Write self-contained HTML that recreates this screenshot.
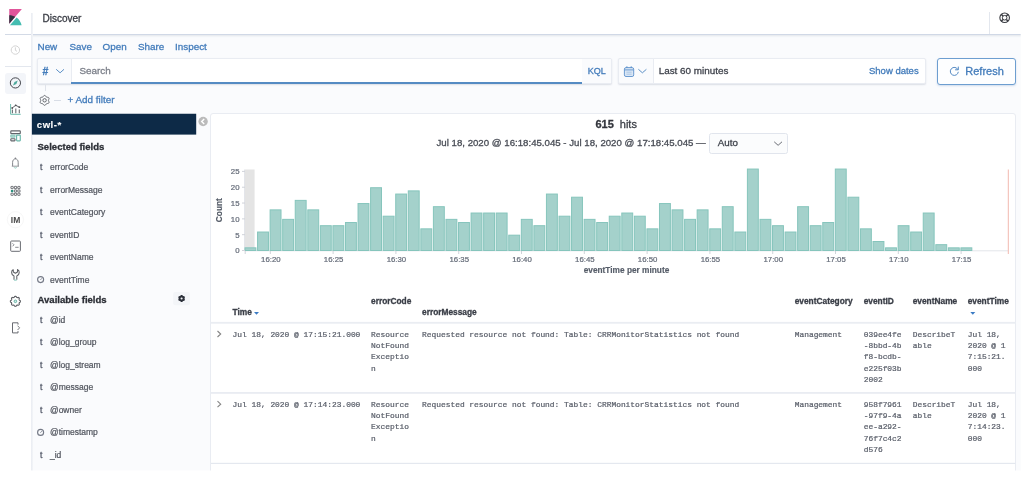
<!DOCTYPE html>
<html lang="en">
<head>
<meta charset="utf-8">
<title>Discover - Kibana</title>
<style>
*{box-sizing:border-box;margin:0;padding:0}
html,body{width:1024px;height:487px;overflow:hidden;background:#fff}
body{font-family:"Liberation Sans",sans-serif;color:#343741;font-size:9.9px;position:relative}
#wrap{position:absolute;left:0;top:0;width:1024px;height:487px;filter:blur(0.5px)}
.abs{position:absolute}
.t{position:absolute;white-space:nowrap;line-height:12px;-webkit-text-stroke:0.3px currentColor}
#bg{left:32px;top:35px;width:992px;height:440px;background:#fafbfd}
#header{left:0;top:0;width:1024px;height:34.5px;background:#fff;border-bottom:1px solid #d0d8e6;box-shadow:0 1px 2px rgba(152,162,179,.25)}
#nav{left:0;top:0;width:31.5px;height:475px;background:#fff}
#navb{left:30.7px;top:12.5px;width:2.1px;height:462px;background:linear-gradient(to right,#e9ecf2,#f3f5f8)}
#navsep1{left:5px;top:34px;width:26px;height:1px;background:#d3dae6}
#navsep2{left:5px;top:66px;width:26px;height:1px;background:#e3e7ee}
#navact{left:5px;top:72.5px;width:21px;height:21px;border-radius:3px;background:#f3f5f9}
.lnk{color:#437cbb}
.chart{position:absolute;left:0;top:0}
.tk{font-family:"Liberation Sans",sans-serif;font-size:7.8px;fill:#666d7a;stroke:#666d7a;stroke-width:0.22px}
.axt{font-family:"Liberation Sans",sans-serif;font-size:8.3px;font-weight:bold;fill:#555c68;stroke:#555c68;stroke-width:0.15px}
#qbar{left:37px;top:58px;width:575.3px;height:26.4px;background:#fff;border:1px solid #e9ecf2;border-radius:2px;box-shadow:0 1px 1.5px rgba(150,160,180,.3)}
#qapp{left:582px;top:59px;width:29.3px;height:24.4px;background:#fafbfd}
#qpre{left:37px;top:58px;width:34.5px;height:26.4px;background:#fafbfd;border:1px solid #e9ecf2;border-right:1px solid #e9ecf2;border-radius:2px 0 0 2px}
#qline{left:71.3px;top:82.4px;width:510.7px;height:1.6px;background:#558bc3}
#dbar{left:617.7px;top:58px;width:308.8px;height:26.4px;background:#fff;border:1px solid #e9ecf2;border-radius:2px;box-shadow:0 1px 1.5px rgba(150,160,180,.3)}
#dpre{left:617.7px;top:58px;width:36px;height:26.4px;background:#fafbfd;border:1px solid #e9ecf2;border-radius:2px 0 0 2px}
#refresh{left:936.7px;top:57.8px;width:79.2px;height:27px;background:#fdfeff;border:1.3px solid #6d9ed0;border-radius:3px;box-shadow:0 1px 2px rgba(80,130,190,.25)}
#sidehd{left:32px;top:113.8px;width:164.2px;height:20.7px;background:#0d2a47}
#panel{left:210px;top:113px;width:805.5px;height:360px;background:#fff;border:1px solid #e9ecf2;border-radius:3px 3px 0 0}
.fld{color:#52565f;font-size:8.5px;-webkit-text-stroke:0.22px currentColor}
.ft{color:#555b6a;font-size:8.6px;-webkit-text-stroke:0.3px currentColor}
.sh{font-weight:bold;font-size:9.55px;color:#2c2f36}
.th{font-weight:bold;font-size:8.35px;color:#3a3e47}
.td{font-family:"Liberation Mono",monospace;font-size:7.9px;line-height:11.35px;color:#5a5f6a;white-space:pre;position:absolute;-webkit-text-stroke:0.22px currentColor}
.w8{white-space:normal;word-break:break-all;width:38.6px}
.w9{white-space:normal;word-break:break-all;width:43.4px}
#selbox{left:708.7px;top:133px;width:79.8px;height:21px;border:1px solid #e1e5ed;border-radius:2.5px;background:#fbfcfd}
</style>
</head>
<body>
<div id="wrap">
<div class="abs" id="bg"></div>
<div class="abs" id="header"></div>
<div class="abs" id="nav"></div>
<div class="abs" id="navb"></div>
<div class="abs" id="navsep1"></div>
<div class="abs" id="navsep2"></div>
<div class="abs" id="navact"></div>

<!-- header -->
<div class="t" style="left:42.5px;top:12.5px;font-size:10px;color:#3a3d45">Discover</div>
<div class="abs" style="left:988.5px;top:12px;width:1px;height:22px;background:#e3e7ee"></div>

<!-- top nav menu -->
<div class="t lnk" style="left:37.5px;top:41px">New</div>
<div class="t lnk" style="left:69.5px;top:41px">Save</div>
<div class="t lnk" style="left:102.5px;top:41px">Open</div>
<div class="t lnk" style="left:138px;top:41px">Share</div>
<div class="t lnk" style="left:175px;top:41px">Inspect</div>

<!-- query bar -->
<div class="abs" id="qbar"></div>
<div class="abs" id="qapp"></div>
<div class="abs" id="qpre"></div>
<div class="abs" id="qline"></div>
<div class="t lnk" style="left:42.5px;top:64.5px;font-size:10.5px;font-weight:bold">#</div>
<div class="t" style="left:79.4px;top:65px;color:#7b7f89">Search</div>
<div class="t lnk" style="left:587.7px;top:65px;font-size:9px">KQL</div>

<!-- date picker -->
<div class="abs" id="dbar"></div>
<div class="abs" id="dpre"></div>
<div class="t" style="left:658.7px;top:65px;color:#40444d">Last 60 minutes</div>
<div class="t lnk" style="left:869px;top:65px;font-size:9.5px">Show dates</div>
<div class="abs" id="refresh"></div>
<div class="t lnk" style="left:965.3px;top:64.5px;font-size:11px">Refresh</div>

<!-- filter row -->
<div class="abs" style="left:45px;top:84px;width:1px;height:7px;background:#dfe3ea"></div>
<div class="abs" style="left:54px;top:99.5px;width:6.5px;height:1px;background:#d8dde6"></div>
<div class="t lnk" style="left:67.5px;top:94px">+ Add filter</div>

<!-- sidebar -->
<svg class="abs" style="left:0;top:0" width="1024" height="487" viewBox="0 0 1024 487"><rect x="31.9" y="113.75" width="164.3" height="20.85" fill="#0d2a47"/></svg>
<div class="t" style="left:36.8px;top:118.5px;font-weight:bold;color:#fff;font-size:9.6px;letter-spacing:0.5px;-webkit-text-stroke:0.1px #fff">cwl-*</div>
<div class="t sh" style="left:37.5px;top:141px">Selected fields</div>
<div class="t ft" style="left:40px;top:161.3px">t</div><div class="t fld" style="left:50px;top:161.3px">errorCode</div>
<div class="t ft" style="left:40px;top:183.8px">t</div><div class="t fld" style="left:50px;top:183.8px">errorMessage</div>
<div class="t ft" style="left:40px;top:206.3px">t</div><div class="t fld" style="left:50px;top:206.3px">eventCategory</div>
<div class="t ft" style="left:40px;top:228.8px">t</div><div class="t fld" style="left:50px;top:228.8px">eventID</div>
<div class="t ft" style="left:40px;top:251.3px">t</div><div class="t fld" style="left:50px;top:251.3px">eventName</div>
<div class="t fld" style="left:50px;top:273.8px">eventTime</div>
<div class="t sh" style="left:37.5px;top:293.9px">Available fields</div>
<div class="t ft" style="left:40px;top:313.8px">t</div><div class="t fld" style="left:50px;top:313.8px">@id</div>
<div class="t ft" style="left:40px;top:336.3px">t</div><div class="t fld" style="left:50px;top:336.3px">@log_group</div>
<div class="t ft" style="left:40px;top:358.8px">t</div><div class="t fld" style="left:50px;top:358.8px">@log_stream</div>
<div class="t ft" style="left:40px;top:381.3px">t</div><div class="t fld" style="left:50px;top:381.3px">@message</div>
<div class="t ft" style="left:40px;top:403.8px">t</div><div class="t fld" style="left:50px;top:403.8px">@owner</div>
<div class="t fld" style="left:50px;top:426.3px">@timestamp</div>
<div class="t ft" style="left:40px;top:448.8px">t</div><div class="t fld" style="left:50px;top:448.8px">_id</div>

<!-- main panel -->
<div class="abs" id="panel"></div>
<div class="t" style="left:595.5px;top:118.2px;font-size:11px;color:#33363d"><b>615</b></div>
<div class="t" style="left:619.8px;top:118.2px;font-size:11px;color:#3d4048">hits</div>
<div class="t" style="left:436.5px;top:137px;color:#4a4e57;font-size:9.66px">Jul 18, 2020 @ 16:18:45.045 - Jul 18, 2020 @ 17:18:45.045 —</div>
<div class="abs" id="selbox"></div>
<div class="t" style="left:717.8px;top:137px;color:#40444d;font-size:9.8px">Auto</div>

<svg class="chart" width="1024" height="487" viewBox="0 0 1024 487">
<rect x="245" y="169.5" width="9.6" height="81" fill="#e4e4e4"/>
<path d="M244.5 169.5V251M244.5 250.8H1008" stroke="#e3e5ea" stroke-width="1" fill="none"/>
<rect x="245.00" y="247.84" width="10.90" height="2.66" fill="#a4d1cb" stroke="#86c5bc" stroke-width="1"/>
<rect x="257.56" y="232.02" width="10.90" height="18.48" fill="#a4d1cb" stroke="#86c5bc" stroke-width="1"/>
<rect x="270.12" y="209.87" width="10.90" height="40.63" fill="#a4d1cb" stroke="#86c5bc" stroke-width="1"/>
<rect x="282.68" y="219.36" width="10.90" height="31.14" fill="#a4d1cb" stroke="#86c5bc" stroke-width="1"/>
<rect x="295.24" y="200.38" width="10.90" height="50.12" fill="#a4d1cb" stroke="#86c5bc" stroke-width="1"/>
<rect x="307.80" y="209.87" width="10.90" height="40.63" fill="#a4d1cb" stroke="#86c5bc" stroke-width="1"/>
<rect x="320.36" y="225.69" width="10.90" height="24.81" fill="#a4d1cb" stroke="#86c5bc" stroke-width="1"/>
<rect x="332.92" y="225.69" width="10.90" height="24.81" fill="#a4d1cb" stroke="#86c5bc" stroke-width="1"/>
<rect x="345.48" y="222.52" width="10.90" height="27.98" fill="#a4d1cb" stroke="#86c5bc" stroke-width="1"/>
<rect x="358.04" y="203.54" width="10.90" height="46.96" fill="#a4d1cb" stroke="#86c5bc" stroke-width="1"/>
<rect x="370.60" y="187.72" width="10.90" height="62.78" fill="#a4d1cb" stroke="#86c5bc" stroke-width="1"/>
<rect x="383.16" y="216.20" width="10.90" height="34.30" fill="#a4d1cb" stroke="#86c5bc" stroke-width="1"/>
<rect x="395.72" y="194.05" width="10.90" height="56.45" fill="#a4d1cb" stroke="#86c5bc" stroke-width="1"/>
<rect x="408.28" y="190.88" width="10.90" height="59.62" fill="#a4d1cb" stroke="#86c5bc" stroke-width="1"/>
<rect x="420.84" y="228.85" width="10.90" height="21.65" fill="#a4d1cb" stroke="#86c5bc" stroke-width="1"/>
<rect x="433.40" y="206.70" width="10.90" height="43.80" fill="#a4d1cb" stroke="#86c5bc" stroke-width="1"/>
<rect x="445.96" y="219.36" width="10.90" height="31.14" fill="#a4d1cb" stroke="#86c5bc" stroke-width="1"/>
<rect x="458.52" y="222.52" width="10.90" height="27.98" fill="#a4d1cb" stroke="#86c5bc" stroke-width="1"/>
<rect x="471.08" y="213.03" width="10.90" height="37.47" fill="#a4d1cb" stroke="#86c5bc" stroke-width="1"/>
<rect x="483.64" y="213.03" width="10.90" height="37.47" fill="#a4d1cb" stroke="#86c5bc" stroke-width="1"/>
<rect x="496.20" y="213.03" width="10.90" height="37.47" fill="#a4d1cb" stroke="#86c5bc" stroke-width="1"/>
<rect x="508.76" y="235.18" width="10.90" height="15.32" fill="#a4d1cb" stroke="#86c5bc" stroke-width="1"/>
<rect x="521.32" y="219.36" width="10.90" height="31.14" fill="#a4d1cb" stroke="#86c5bc" stroke-width="1"/>
<rect x="533.88" y="225.69" width="10.90" height="24.81" fill="#a4d1cb" stroke="#86c5bc" stroke-width="1"/>
<rect x="546.44" y="194.05" width="10.90" height="56.45" fill="#a4d1cb" stroke="#86c5bc" stroke-width="1"/>
<rect x="559.00" y="216.20" width="10.90" height="34.30" fill="#a4d1cb" stroke="#86c5bc" stroke-width="1"/>
<rect x="571.56" y="197.21" width="10.90" height="53.29" fill="#a4d1cb" stroke="#86c5bc" stroke-width="1"/>
<rect x="584.12" y="219.36" width="10.90" height="31.14" fill="#a4d1cb" stroke="#86c5bc" stroke-width="1"/>
<rect x="596.68" y="222.52" width="10.90" height="27.98" fill="#a4d1cb" stroke="#86c5bc" stroke-width="1"/>
<rect x="609.24" y="216.20" width="10.90" height="34.30" fill="#a4d1cb" stroke="#86c5bc" stroke-width="1"/>
<rect x="621.80" y="213.03" width="10.90" height="37.47" fill="#a4d1cb" stroke="#86c5bc" stroke-width="1"/>
<rect x="634.36" y="216.20" width="10.90" height="34.30" fill="#a4d1cb" stroke="#86c5bc" stroke-width="1"/>
<rect x="646.92" y="228.85" width="10.90" height="21.65" fill="#a4d1cb" stroke="#86c5bc" stroke-width="1"/>
<rect x="659.48" y="203.54" width="10.90" height="46.96" fill="#a4d1cb" stroke="#86c5bc" stroke-width="1"/>
<rect x="672.04" y="209.87" width="10.90" height="40.63" fill="#a4d1cb" stroke="#86c5bc" stroke-width="1"/>
<rect x="684.60" y="219.36" width="10.90" height="31.14" fill="#a4d1cb" stroke="#86c5bc" stroke-width="1"/>
<rect x="697.16" y="209.87" width="10.90" height="40.63" fill="#a4d1cb" stroke="#86c5bc" stroke-width="1"/>
<rect x="709.72" y="228.85" width="10.90" height="21.65" fill="#a4d1cb" stroke="#86c5bc" stroke-width="1"/>
<rect x="722.28" y="206.70" width="10.90" height="43.80" fill="#a4d1cb" stroke="#86c5bc" stroke-width="1"/>
<rect x="734.84" y="232.02" width="10.90" height="18.48" fill="#a4d1cb" stroke="#86c5bc" stroke-width="1"/>
<rect x="747.40" y="169.05" width="10.90" height="81.45" fill="#a4d1cb" stroke="#86c5bc" stroke-width="1"/>
<rect x="759.96" y="219.36" width="10.90" height="31.14" fill="#a4d1cb" stroke="#86c5bc" stroke-width="1"/>
<rect x="772.52" y="225.69" width="10.90" height="24.81" fill="#a4d1cb" stroke="#86c5bc" stroke-width="1"/>
<rect x="785.08" y="232.02" width="10.90" height="18.48" fill="#a4d1cb" stroke="#86c5bc" stroke-width="1"/>
<rect x="797.64" y="206.70" width="10.90" height="43.80" fill="#a4d1cb" stroke="#86c5bc" stroke-width="1"/>
<rect x="810.20" y="225.69" width="10.90" height="24.81" fill="#a4d1cb" stroke="#86c5bc" stroke-width="1"/>
<rect x="822.76" y="222.52" width="10.90" height="27.98" fill="#a4d1cb" stroke="#86c5bc" stroke-width="1"/>
<rect x="835.32" y="169.05" width="10.90" height="81.45" fill="#a4d1cb" stroke="#86c5bc" stroke-width="1"/>
<rect x="847.88" y="197.21" width="10.90" height="53.29" fill="#a4d1cb" stroke="#86c5bc" stroke-width="1"/>
<rect x="860.44" y="228.85" width="10.90" height="21.65" fill="#a4d1cb" stroke="#86c5bc" stroke-width="1"/>
<rect x="873.00" y="241.51" width="10.90" height="8.99" fill="#a4d1cb" stroke="#86c5bc" stroke-width="1"/>
<rect x="885.56" y="247.84" width="10.90" height="2.66" fill="#a4d1cb" stroke="#86c5bc" stroke-width="1"/>
<rect x="898.12" y="225.69" width="10.90" height="24.81" fill="#a4d1cb" stroke="#86c5bc" stroke-width="1"/>
<rect x="910.68" y="232.02" width="10.90" height="18.48" fill="#a4d1cb" stroke="#86c5bc" stroke-width="1"/>
<rect x="923.24" y="213.03" width="10.90" height="37.47" fill="#a4d1cb" stroke="#86c5bc" stroke-width="1"/>
<rect x="935.80" y="244.67" width="10.90" height="5.83" fill="#a4d1cb" stroke="#86c5bc" stroke-width="1"/>
<rect x="948.36" y="247.84" width="10.90" height="2.66" fill="#a4d1cb" stroke="#86c5bc" stroke-width="1"/>
<rect x="960.92" y="247.84" width="10.90" height="2.66" fill="#a4d1cb" stroke="#86c5bc" stroke-width="1"/>
<path d="M242 250.50H245" stroke="#d0d3d9" stroke-width="1"/>
<text x="239.5" y="253.40" text-anchor="end" class="tk">0</text>
<path d="M242 234.68H245" stroke="#d0d3d9" stroke-width="1"/>
<text x="239.5" y="237.58" text-anchor="end" class="tk">5</text>
<path d="M242 218.86H245" stroke="#d0d3d9" stroke-width="1"/>
<text x="239.5" y="221.76" text-anchor="end" class="tk">10</text>
<path d="M242 203.04H245" stroke="#d0d3d9" stroke-width="1"/>
<text x="239.5" y="205.94" text-anchor="end" class="tk">15</text>
<path d="M242 187.22H245" stroke="#d0d3d9" stroke-width="1"/>
<text x="239.5" y="190.12" text-anchor="end" class="tk">20</text>
<path d="M242 171.40H245" stroke="#d0d3d9" stroke-width="1"/>
<text x="239.5" y="174.30" text-anchor="end" class="tk">25</text>
<path d="M270.32 251V254" stroke="#d0d3d9" stroke-width="1"/>
<text x="270.82" y="262.3" text-anchor="middle" class="tk">16:20</text>
<path d="M333.12 251V254" stroke="#d0d3d9" stroke-width="1"/>
<text x="333.62" y="262.3" text-anchor="middle" class="tk">16:25</text>
<path d="M395.92 251V254" stroke="#d0d3d9" stroke-width="1"/>
<text x="396.42" y="262.3" text-anchor="middle" class="tk">16:30</text>
<path d="M458.72 251V254" stroke="#d0d3d9" stroke-width="1"/>
<text x="459.22" y="262.3" text-anchor="middle" class="tk">16:35</text>
<path d="M521.52 251V254" stroke="#d0d3d9" stroke-width="1"/>
<text x="522.02" y="262.3" text-anchor="middle" class="tk">16:40</text>
<path d="M584.32 251V254" stroke="#d0d3d9" stroke-width="1"/>
<text x="584.82" y="262.3" text-anchor="middle" class="tk">16:45</text>
<path d="M647.12 251V254" stroke="#d0d3d9" stroke-width="1"/>
<text x="647.62" y="262.3" text-anchor="middle" class="tk">16:50</text>
<path d="M709.92 251V254" stroke="#d0d3d9" stroke-width="1"/>
<text x="710.42" y="262.3" text-anchor="middle" class="tk">16:55</text>
<path d="M772.72 251V254" stroke="#d0d3d9" stroke-width="1"/>
<text x="773.22" y="262.3" text-anchor="middle" class="tk">17:00</text>
<path d="M835.52 251V254" stroke="#d0d3d9" stroke-width="1"/>
<text x="836.02" y="262.3" text-anchor="middle" class="tk">17:05</text>
<path d="M898.32 251V254" stroke="#d0d3d9" stroke-width="1"/>
<text x="898.82" y="262.3" text-anchor="middle" class="tk">17:10</text>
<path d="M961.12 251V254" stroke="#d0d3d9" stroke-width="1"/>
<text x="961.62" y="262.3" text-anchor="middle" class="tk">17:15</text>
<path d="M245.2 251V254" stroke="#d0d3d9" stroke-width="1"/>
<path d="M1008.3 169.5V254" stroke="#f2b8b0" stroke-width="1"/>
<text x="626.5" y="273.4" text-anchor="middle" class="axt">eventTime per minute</text>
<text transform="translate(222.1 210.2) rotate(-90)" text-anchor="middle" class="axt">Count</text>
</svg>

<!-- table header -->
<div class="t th" style="left:232.5px;top:305.7px">Time</div>
<div class="t th" style="left:371px;top:294.5px">errorCode</div>
<div class="t th" style="left:422px;top:305.7px">errorMessage</div>
<div class="t th" style="left:794.7px;top:294.5px">eventCategory</div>
<div class="t th" style="left:863.7px;top:294.5px">eventID</div>
<div class="t th" style="left:912.7px;top:294.5px">eventName</div>
<div class="t th" style="left:967.7px;top:294.5px">eventTime</div>
<svg class="abs" style="left:0;top:0" width="1024" height="487" viewBox="0 0 1024 487"><rect x="211" y="321.9" width="804.5" height="1.8" fill="#eaedf2"/><rect x="211" y="392" width="804.5" height="1.8" fill="#e9ecf2"/><rect x="211" y="462.8" width="804.5" height="1.2" fill="#e4e8ef"/></svg>

<!-- row 1 -->
<div class="td" style="left:232.5px;top:328.6px">Jul 18, 2020 @ 17:15:21.000</div>
<div class="td w8" style="left:371px;top:328.6px">ResourceNotFoundException</div>
<div class="td" style="left:422px;top:328.6px">Requested resource not found: Table: CRRMonitorStatistics not found</div>
<div class="td" style="left:794.7px;top:328.6px">Management</div>
<div class="td w8" style="left:863.7px;top:328.6px">039ee4fe-8bbd-4bf8-bcdb-e225f03b2002</div>
<div class="td w9" style="left:912.7px;top:328.6px">DescribeTable</div>
<div class="td w8" style="left:967.7px;top:328.6px">Jul 18, 2020 @ 17:15:21.000</div>

<!-- row 2 -->
<div class="td" style="left:232.5px;top:398.8px">Jul 18, 2020 @ 17:14:23.000</div>
<div class="td w8" style="left:371px;top:398.8px">ResourceNotFoundException</div>
<div class="td" style="left:422px;top:398.8px">Requested resource not found: Table: CRRMonitorStatistics not found</div>
<div class="td" style="left:794.7px;top:398.8px">Management</div>
<div class="td w8" style="left:863.7px;top:398.8px">958f7961-97f9-4aee-a292-76f7c4c2d576</div>
<div class="td w9" style="left:912.7px;top:398.8px">DescribeTable</div>
<div class="td w8" style="left:967.7px;top:398.8px">Jul 18, 2020 @ 17:14:23.000</div>


<!-- icons -->
<svg class="abs" style="left:0;top:0" width="1024" height="487" viewBox="0 0 1024 487" fill="none">
  <!-- kibana logo -->
  <g transform="translate(7.22 9.06) scale(0.507)">
    <polygon fill="#e0559a" points="4 0 4 28.789 28.935 .017"/>
    <path fill="#2f3340" d="M4,12 L4,28.789 L15.906,15.051 C12.368,13.115 8.317,12 4,12"/>
    <path fill="#45bdb1" d="M18.4793,16.6644 L6.2683,30.7544 L5.1863,31.9994 L28.4523,31.9994 C27.1763,25.7044 23.5243,20.2734 18.4793,16.6644"/>
  </g>
  <!-- recent clock -->
  <g stroke="#cfcfcf" stroke-width="0.9">
    <circle cx="15.4" cy="50.05" r="4.2"/>
    <path d="M15.4 47.4V50.4L17 51.3"/>
  </g>
  <!-- discover compass -->
  <circle cx="15.4" cy="82.9" r="5.1" stroke="#45474d" stroke-width="1"/>
  <polygon points="13,85.4 14.5,81.9 17.8,80.4 16.3,83.9" fill="#4fa99b"/>
  <!-- visualize -->
  <path d="M10.6 104V114.3H20.7" stroke="#6fbcae" stroke-width="1"/>
  <path d="M12.4 109.6V113.2M15.8 108.6V113.2M19.3 109.6V113.2" stroke="#6b6d73" stroke-width="1.1"/>
  <path d="M12.2 108L15.7 105.3L19.4 107.2" stroke="#505257" stroke-width="0.9"/>
  <circle cx="12.2" cy="108" r="0.9" fill="#505257"/><circle cx="15.7" cy="105.3" r="0.9" fill="#505257"/><circle cx="19.4" cy="107.2" r="0.9" fill="#505257"/>
  <!-- dashboard -->
  <rect x="10.8" y="130.9" width="9.5" height="2.7" rx="0.6" stroke="#63656b" stroke-width="1.15"/>
  <rect x="10.8" y="135.1" width="4.2" height="2" rx="0.4" fill="#bfe2db" stroke="#8fcabf" stroke-width="1.1"/>
  <rect x="16.6" y="135.1" width="3.7" height="5.7" rx="0.5" stroke="#6bb8ab" stroke-width="1.15" fill="#fff"/>
  <rect x="10.8" y="138.7" width="4.2" height="2.1" rx="0.5" stroke="#63656b" stroke-width="1.15"/>
  <!-- bell -->
  <path d="M12.6 166.1V162.3C12.6 160.2 13.8 158.9 15.4 158.9C17 158.9 18.2 160.2 18.2 162.3V166.1" stroke="#77797f" stroke-width="0.9"/>
  <path d="M11.8 166.2H19" stroke="#8a8d92" stroke-width="0.9"/>
  <circle cx="15.4" cy="158.2" r="0.8" fill="#77797f"/>
  <path d="M14.1 167.3C14.5 168.3 16.3 168.3 16.7 167.3" stroke="#7fc4b8" stroke-width="0.9"/>
  <!-- grid app -->
  <g stroke="#76787d" stroke-width="1.05">
    <circle cx="12.1" cy="187.5" r="1.25"/><circle cx="15.5" cy="187.5" r="1.25"/><circle cx="18.9" cy="187.5" r="1.25"/>
    <circle cx="15.5" cy="190.9" r="1.25"/><circle cx="18.9" cy="190.9" r="1.25"/>
    <circle cx="12.1" cy="194.3" r="1.25"/><circle cx="15.5" cy="194.3" r="1.25"/><circle cx="18.9" cy="194.3" r="1.25"/>
  </g>
  <circle cx="12.1" cy="191" r="1.35" fill="#2d8f7e"/>
  <!-- IM -->
  <circle cx="15.4" cy="219.7" r="8.1" stroke="#f7f7f7" stroke-width="1"/>
  <!-- console -->
  <rect x="10.7" y="241" width="9.7" height="10.3" rx="0.8" stroke="#6a6c72" stroke-width="1"/>
  <path d="M12.5 243.3L14 244.8L12.5 246.3" stroke="#6a6c72" stroke-width="0.8"/>
  <path d="M15.2 247.3H18.6" stroke="#6a6c72" stroke-width="0.8"/>
  <!-- wrench -->
  <path d="M13.3 269.5C11.9 270.1 11.5 271.4 11.6 272.6C11.7 274.3 12.7 275.5 14 276.1V279.8M16.8 279.8V276.1C18.1 275.5 19.1 274.3 19.2 272.6C19.3 271.4 18.9 270.1 17.5 269.5V272L15.4 273.3L13.3 272V269.5" stroke="#606267" stroke-width="1.05" stroke-linejoin="round"/>
  <path d="M14.1 280.1H16.7" stroke="#7fc4b8" stroke-width="1"/>
  <!-- management gear -->
  <path d="M20.42 301.30L20.39 300.97L20.28 300.66L19.91 300.40L19.54 300.19L19.38 299.95L19.26 299.70L19.17 299.44L19.11 299.16L19.22 298.74L19.30 298.31L19.16 298.01L18.95 297.75L18.69 297.54L18.39 297.40L17.96 297.48L17.54 297.59L17.26 297.53L17.00 297.44L16.75 297.32L16.51 297.16L16.30 296.79L16.04 296.42L15.73 296.31L15.40 296.28L15.07 296.31L14.76 296.42L14.50 296.79L14.29 297.16L14.05 297.32L13.80 297.44L13.54 297.53L13.26 297.59L12.84 297.48L12.41 297.40L12.11 297.54L11.85 297.75L11.64 298.01L11.50 298.31L11.58 298.74L11.69 299.16L11.63 299.44L11.54 299.70L11.42 299.95L11.26 300.19L10.89 300.40L10.52 300.66L10.41 300.97L10.38 301.30L10.41 301.63L10.52 301.94L10.89 302.20L11.26 302.41L11.42 302.65L11.54 302.90L11.63 303.16L11.69 303.44L11.58 303.86L11.50 304.29L11.64 304.59L11.85 304.85L12.11 305.06L12.41 305.20L12.84 305.12L13.26 305.01L13.54 305.07L13.80 305.16L14.05 305.28L14.29 305.44L14.50 305.81L14.76 306.18L15.07 306.29L15.40 306.32L15.73 306.29L16.04 306.18L16.30 305.81L16.51 305.44L16.75 305.28L17.00 305.16L17.26 305.07L17.54 305.01L17.96 305.12L18.39 305.20L18.69 305.06L18.95 304.85L19.16 304.59L19.30 304.29L19.22 303.86L19.11 303.44L19.17 303.16L19.26 302.90L19.38 302.65L19.54 302.41L19.91 302.20L20.28 301.94L20.39 301.63Z" stroke="#5f6166" stroke-width="1.15" stroke-linejoin="round"/>
  <circle cx="15.4" cy="301.3" r="1.3" stroke="#5aae9f" stroke-width="0.9" fill="#d5ece8"/>
  <!-- logout -->
  <path d="M18 324.6V322.8H12.5V332.9H18V331.1" stroke="#6a6c72" stroke-width="1"/>
  <path d="M17.6 325.7L19.6 327.85L17.6 330" stroke="#6a6c72" stroke-width="0.9"/>
  <!-- help lifebuoy -->
  <g stroke="#3a3c42">
    <circle cx="1004.65" cy="17.75" r="4.8" stroke-width="1.1"/>
    <circle cx="1004.65" cy="17.75" r="2.3" stroke-width="1"/>
    <path d="M1001.2 14.3L1002.95 16.05M1008.1 14.3L1006.35 16.05M1001.2 21.2L1002.95 19.45M1008.1 21.2L1006.35 19.45" stroke-width="1.6"/>
  </g>
  <!-- query chevrons -->
  <path d="M56.2 69.3L60.1 72.8L64 69.3" stroke="#4a83c0" stroke-width="0.9"/>
  <path d="M638.4 69.3L642.4 72.8L646.4 69.3" stroke="#4a83c0" stroke-width="0.9"/>
  <path d="M774.2 141.8L778.1 145.3L782 141.8" stroke="#5a5e67" stroke-width="0.9"/>
  <!-- calendar -->
  <rect x="624.4" y="67.6" width="9.3" height="8.9" rx="1.6" stroke="#5c91cc" stroke-width="0.9" fill="#dbe7f5"/>
  <path d="M624.4 69.9H633.7" stroke="#5c91cc" stroke-width="0.9"/>
  <path d="M626.9 66.3V68M631.2 66.3V68" stroke="#5c91cc" stroke-width="1"/>
  <path d="M626.4 72.2H631.7M626.4 74.2H631.7" stroke="#9fbfe2" stroke-width="0.8"/>
  <!-- refresh icon -->
  <path d="M957.9 69.6A4 4 0 1 0 958.3 71.8" stroke="#4a83c0" stroke-width="0.95"/>
  <path d="M958.3 66.6V69.8H955.1" stroke="#4a83c0" stroke-width="0.95"/>
  <!-- filter gear -->
  <g stroke="#63666c" stroke-width="1">
    <path d="M48.45 100.40L48.49 100.06L48.62 99.69L48.85 99.26L49.03 98.79L49.03 98.33L48.89 97.93L48.61 97.60L48.21 97.37L47.71 97.29L47.23 97.27L46.84 97.20L46.53 97.07L46.25 96.86L46.00 96.56L45.74 96.15L45.42 95.76L45.03 95.53L44.60 95.45L44.17 95.53L43.78 95.76L43.46 96.15L43.20 96.56L42.95 96.86L42.68 97.07L42.36 97.20L41.97 97.27L41.49 97.29L40.99 97.37L40.59 97.60L40.31 97.92L40.17 98.33L40.17 98.79L40.35 99.26L40.58 99.69L40.71 100.06L40.75 100.40L40.71 100.74L40.58 101.11L40.35 101.54L40.17 102.01L40.17 102.47L40.31 102.88L40.59 103.20L40.99 103.43L41.49 103.51L41.97 103.53L42.36 103.60L42.67 103.73L42.95 103.94L43.20 104.24L43.46 104.65L43.78 105.04L44.17 105.27L44.60 105.35L45.03 105.27L45.42 105.04L45.74 104.65L46.00 104.24L46.25 103.94L46.52 103.73L46.84 103.60L47.23 103.53L47.71 103.51L48.21 103.43L48.61 103.20L48.89 102.88L49.03 102.47L49.03 102.01L48.85 101.54L48.62 101.11L48.49 100.74Z" stroke-linejoin="round"/>
    <circle cx="44.6" cy="100.3" r="1.7"/>
  </g>
  <!-- collapse button -->
  <circle cx="203.1" cy="121.5" r="4.7" fill="#bbbbbb"/>
  <path d="M204.2 119L201.7 121.5L204.2 124" stroke="#fff" stroke-width="1.4"/>
  <!-- sidebar gear button -->
  <rect x="173.2" y="292" width="16.7" height="13.3" rx="2" fill="#f3f5f8"/>
  <path d="M184.58 298.50L184.60 298.24L184.66 297.96L184.79 297.65L184.89 297.30L184.85 296.98L184.74 296.69L184.54 296.44L184.28 296.25L183.93 296.17L183.59 296.12L183.33 296.03L183.09 295.92L182.87 295.77L182.66 295.58L182.45 295.31L182.21 295.06L181.91 294.92L181.60 294.88L181.29 294.92L180.99 295.06L180.75 295.31L180.54 295.58L180.33 295.77L180.11 295.92L179.87 296.03L179.61 296.12L179.27 296.17L178.92 296.25L178.66 296.44L178.46 296.69L178.35 296.98L178.31 297.30L178.41 297.65L178.54 297.96L178.60 298.24L178.62 298.50L178.60 298.76L178.54 299.04L178.41 299.35L178.31 299.70L178.35 300.02L178.46 300.31L178.66 300.56L178.92 300.75L179.27 300.83L179.61 300.88L179.87 300.97L180.11 301.08L180.33 301.23L180.54 301.42L180.75 301.69L180.99 301.94L181.29 302.08L181.60 302.12L181.91 302.08L182.21 301.94L182.45 301.69L182.66 301.42L182.87 301.23L183.09 301.08L183.33 300.97L183.59 300.88L183.93 300.83L184.28 300.75L184.54 300.56L184.74 300.31L184.85 300.02L184.89 299.70L184.79 299.35L184.66 299.04L184.60 298.76ZM180.55 298.50a1.05 1.05 0 1 0 2.1 0a1.05 1.05 0 1 0 -2.1 0Z" fill="#2b2f39" fill-rule="evenodd"/>
  <!-- field clock icons -->
  <g stroke="#747986" stroke-width="1.15">
    <circle cx="40.6" cy="279.6" r="3"/><path d="M40.4 280L41.8 278.3" stroke-width="0.8"/>
    <circle cx="40.6" cy="432.4" r="3"/><path d="M40.4 432.8L41.8 431.1" stroke-width="0.8"/>
  </g>
  <!-- sort arrows -->
  <path d="M254 312H259L256.5 314.8Z" fill="#3b7bc4"/>
  <path d="M970.3 312H975.3L972.8 314.8Z" fill="#3b7bc4"/>
  <!-- expand arrows -->
  <path d="M217.5 331L220.7 334L217.5 337" stroke="#858585" stroke-width="1.1"/>
  <path d="M217.5 401.2L220.7 404.2L217.5 407.2" stroke="#858585" stroke-width="1.1"/>
</svg>
<div class="t" style="left:10.8px;top:213.6px;font-size:8.5px;font-weight:bold;color:#4a4a4a;-webkit-text-stroke:0">IM</div>
<svg class="abs" style="left:0;top:0" width="1024" height="487" viewBox="0 0 1024 487"><rect x="0" y="470.5" width="1024" height="20" fill="#fff"/><rect x="1020.7" y="0" width="6" height="487" fill="#fff"/></svg>
</div>
</body>
</html>
